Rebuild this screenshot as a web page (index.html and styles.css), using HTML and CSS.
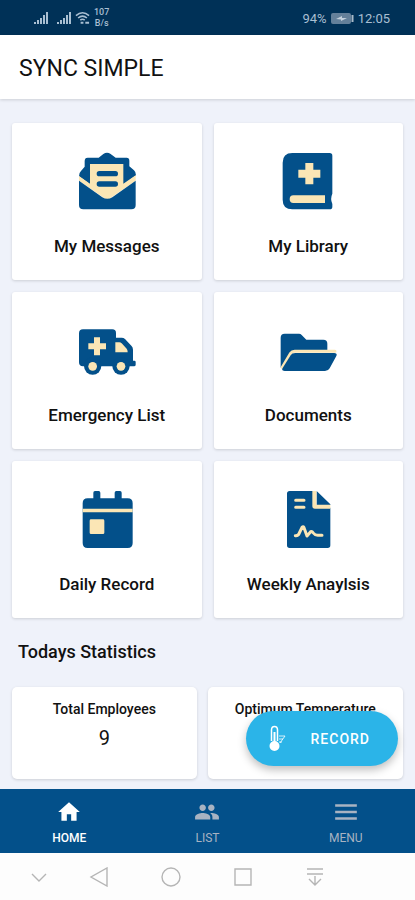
FILE: index.html
```html
<!DOCTYPE html>
<html lang="en">
<head>
  <meta charset="UTF-8" />
  <meta name="viewport" content="width=device-width, initial-scale=1.0"/>
  <title>Sync Simple</title>
  <link rel="stylesheet" href="styles.css">
</head>
<body>

  <div class="status-bar">
    <div class="status-group">
      <svg class="signal" viewBox="0 0 14 12" fill="currentColor"><path d="M0 10h2v2H0zM3 8h2v4H3zM6 6h2v6H6zM9 3h2v9H9zM12 0h2v12h-2z"/></svg>
      <svg class="signal signal-second" viewBox="0 0 14 12" fill="currentColor"><path d="M0 10h2v2H0zM3 8h2v4H3zM6 6h2v6H6zM9 3h2v9H9zM12 0h2v12h-2z"/></svg>
      <svg class="wifi" viewBox="0 0 16 14" fill="none" stroke="currentColor" stroke-width="1.6"><path d="M1 4.500q7-6 14 0M3.300 7q4.700-4 9.400 0M5.600 9.300q2.400-2 4.800 0"/><path d="M6 12h3M11 12h4" stroke-width="2"/></svg>
      <span class="speed">107<br>B/s</span>
    </div>
    <div class="status-group">
      <span>94%</span>
      <svg class="battery" viewBox="0 0 23 11"><rect x="0" y="0" width="20" height="11" rx="2" fill="#64809a"/><path d="M5 6l6-3v2h5l-6 3V6.500z" fill="#c3d0dc"/><path d="M21.500 2v7" stroke="#a9bac9" stroke-width="2"/></svg>
      <span>12:05</span>
    </div>
  </div>

  <header class="app-header">
    <h1>SYNC SIMPLE</h1>
  </header>

  <main class="content">
    <div class="card-grid">
      <a href="#messages" class="card">
        <svg class="card-icon" viewBox="0 0 174 174">
          <path class="blue" d="M76 6q11-8 22 0l15 11h33q8 0 8 9v17l14 12q6 5 6 15L88 135 3 73q0-11 6-16l11-13V27q0-10 9-10h33z"/>
          <path class="cream" d="M36 36h100v59l37-25v16L88 145 3 86V72l33 23z"/>
          <path class="blue" d="M3 86l70 50q15 9 30 0l70-50v73q0 13-13 13H16q-13 0-13-13z"/>
          <path class="blue-line" d="M64 65h48M64 96h48"/>
        </svg>
        <span>My Messages</span>
      </a>
      <a href="#library" class="card">
        <svg class="card-icon" viewBox="0 0 174 174">
          <path class="blue" d="M40 3h112q8 0 8 8v114q-7 15 0 31v8q0 8-8 8H40q-29 0-29-29V32Q11 3 40 3z"/>
          <path class="cream" d="M79 33h24v20h21v24h-21v20H79V77H58V53h21zM43 130h95v23H43q-11 0-11-11 0-12 11-12z"/>
        </svg>
        <span>My Library</span>
      </a>
      <a href="#emergency" class="card">
        <svg class="card-icon" viewBox="0 0 174 174">
          <path class="blue" d="M15 25h88q11 0 11 11v14h17q6 0 10 4l19 20q5 5 5 12v33h4q4 0 4 4v8q0 5-5 5H15q-12 0-12-12V37q0-12 12-12z"/>
          <circle class="blue" cx="44" cy="135" r="26"/>
          <circle class="blue" cx="129" cy="135" r="26"/>
          <circle class="cream" cx="44" cy="136" r="13"/>
          <circle class="cream" cx="129" cy="136" r="13"/>
          <path class="cream" d="M48 49h18v18h18v18H66v18H48V85H31V67h17zM112 64h12q4 0 7 3l15 16q3 3 3 11h-37z"/>
        </svg>
        <span>Emergency List</span>
      </a>
      <a href="#documents" class="card">
        <svg class="card-icon" viewBox="0 0 174 174">
          <path class="blue" d="M17 38h43q5 0 8 4l14 14h51q12 0 12 12v22H45L5 140V50q0-12 12-12z"/>
          <path class="cream-line" d="M10 139l24-41q5-7 13-7h121"/>
          <path class="blue" d="M49 96h117q10 0 6 9l-20 37q-4 8-14 8H17q-11 0-6-9l24-38q4-7 14-7z"/>
        </svg>
        <span>Documents</span>
      </a>
      <a href="#daily" class="card">
        <svg class="card-icon" viewBox="0 0 174 174">
          <path class="blue" d="M46 25V8q0-5 5-5h11q5 0 5 5v17h43V8q0-5 5-5h11q5 0 5 5v17h18q15 0 15 15v119q0 15-15 15H29q-15 0-15-15V40q0-15 15-15z"/>
          <path class="cream" d="M14 56h150v11H14zM39 88h36q4 0 4 4v36q0 4-4 4H39q-4 0-4-4V92q0-4 4-4z"/>
        </svg>
        <span>Daily Record</span>
      </a>
      <a href="#weekly" class="card">
        <svg class="card-icon" viewBox="0 0 174 174">
          <path class="blue" d="M32 3h70v50h52v113q0 8-8 8H32q-8 0-8-8V11q0-8 8-8zM113 3l41 40v2h-41z"/>
          <path class="cream" d="M100 3h12v41h42v12h-46q-8 0-8-8z"/>
          <path class="cream-line" d="M50 31h25M50 52h25M49 137q9 1 12-8l8-17q4-4 6 1l9 25 11-13q4-2 8 4 5 7 13 7h13"/>
        </svg>
        <span>Weekly Anaylsis</span>
      </a>
    </div>

    <h2>Todays Statistics</h2>

    <div class="stats">
      <div class="stat-card">
        <h3>Total Employees</h3>
        <p>9</p>
      </div>
      <div class="stat-card">
        <h3>Optimum Temperature</h3>
      </div>
    </div>

    <button type="button" class="btn-record">
      <svg class="thermometer" viewBox="0 0 18 28" fill="none" stroke="#fff">
        <path d="M3.500 16V5q0-3.500 3-3.500t3 3.500v11" stroke-width="1.500"/>
        <path d="M6.500 7v13" stroke-width="2"/>
        <circle cx="6.500" cy="21" r="4" fill="#fff" stroke-width="2"/>
        <path d="M11 11h6M11 14h4M11 17h3M17 11l-5 7" stroke-width="1" opacity=".8"/>
      </svg>
      <span>RECORD</span>
    </button>
  </main>

  <nav class="tab-bar">
    <a href="#home" class="tab active">
      <svg viewBox="0 0 24 24" fill="currentColor"><path d="M10 20v-6h4v6h5v-8h3L12 3 2 12h3v8z"/></svg>
      <span>HOME</span>
    </a>
    <a href="#list" class="tab">
      <svg viewBox="0 0 24 24" fill="currentColor"><path d="M16 11c1.660 0 2.990-1.340 2.990-3S17.660 5 16 5s-3 1.340-3 3 1.340 3 3 3zm-8 0c1.660 0 2.990-1.340 2.990-3S9.660 5 8 5 5 6.340 5 8s1.340 3 3 3zm0 2c-2.330 0-7 1.170-7 3.500V19h14v-2.500C15 14.170 10.330 13 8 13zm8 0c-.29 0-.62.020-.97.050 1.160.84 1.970 1.970 1.970 3.450V19h6v-2.500c0-2.330-4.670-3.500-7-3.500z"/></svg>
      <span>LIST</span>
    </a>
    <a href="#menu" class="tab">
      <svg viewBox="0 0 24 24" fill="none" stroke="currentColor" stroke-width="2.400"><path d="M2 6h20M2 12h20M2 18h20"/></svg>
      <span>MENU</span>
    </a>
  </nav>

  <div class="system-nav">
    <button type="button" class="hide-nav" aria-label="Hide"><svg viewBox="0 0 20 20"><path d="M3 7l7 7 7-7"/></svg></button>
    <button type="button" aria-label="Back"><svg viewBox="0 0 20 20"><path d="M18 1v18L2 10z"/></svg></button>
    <button type="button" aria-label="Home"><svg viewBox="0 0 20 20"><circle cx="10" cy="10" r="9"/></svg></button>
    <button type="button" aria-label="Recent"><svg viewBox="0 0 20 20"><path d="M2 2h16v16H2z"/></svg></button>
    <button type="button" aria-label="Notifications"><svg viewBox="0 0 20 20"><path d="M2 2h16M2 7h16M10 9v9M4 12l6 6 6-6"/></svg></button>
  </div>

</body>
</html>
```

FILE: styles.css
```css
* {
  box-sizing: border-box;
}

body {
  font-family: Roboto, sans-serif;
  margin: 0;
  min-height: 100vh;
  display: flex;
  flex-direction: column;
  background: #eff2fa;
  color: #111;
}

a {
  color: inherit;
  text-decoration: none;
}

h1, h2, h3, p {
  margin: 0;
}

.status-bar {
  display: flex;
  justify-content: space-between;
  align-items: center;
  height: 35px;
  padding: 1px 25px 0 34px;
  background: #003157;
  color: #a9bfd2;
  font-size: 13px;
}

.status-group {
  display: flex;
  align-items: center;
  gap: 4px;
}

.signal {
  width: 14px;
  height: 12px;
}

.signal-second {
  margin-left: 5px;
}

.wifi {
  width: 15px;
  height: 14px;
}

.battery {
  width: 23px;
  height: 11px;
}

.speed {
  font-size: 9px;
  font-weight: 500;
  line-height: 11px;
  text-align: center;
}

.app-header {
  display: flex;
  align-items: center;
  height: 64px;
  padding: 2px 19px 0;
  background: #fff;
  box-shadow: 0 1px 3px rgba(0, 0, 0, 0.15);
}

.app-header h1 {
  font-size: 23px;
  font-weight: 400;
}

.content {
  position: relative;
  flex: 1;
  padding: 24px 12px 10px;
}

.card-grid {
  display: grid;
  grid-template-columns: 1fr 1fr;
  gap: 12px;
}

.card {
  display: flex;
  flex-direction: column;
  align-items: center;
  gap: 26px;
  padding: 29px 8px 24px;
  background: #fff;
  border-radius: 3px;
  box-shadow: 0 1px 3px rgba(0, 0, 0, 0.15);
  font-size: 17px;
  font-weight: 500;
  line-height: 20px;
}

.card-icon {
  width: 58px;
  height: 58px;
}

.blue {
  fill: #03508a;
}

.cream {
  fill: #fbe6b5;
}

.blue-line {
  fill: none;
  stroke: #03508a;
  stroke-width: 16;
  stroke-linecap: round;
}

.cream-line {
  fill: none;
  stroke: #fbe6b5;
  stroke-width: 9;
  stroke-linecap: round;
  stroke-linejoin: round;
}

.content h2 {
  margin: 22px 6px 23px;
  font-size: 18px;
  font-weight: 500;
  line-height: 24px;
}

.stats {
  display: grid;
  grid-template-columns: 17fr 18fr;
  gap: 11px;
}

.stat-card {
  height: 92px;
  padding-top: 12px;
  background: #fff;
  border-radius: 5px;
  box-shadow: 0 1px 3px rgba(0, 0, 0, 0.15);
  text-align: center;
}

.stat-card h3 {
  font-size: 14px;
  font-weight: 500;
  line-height: 20px;
}

.stat-card p {
  margin-top: 7px;
  font-size: 20px;
  line-height: 24px;
}

.btn-record {
  position: absolute;
  right: 17px;
  bottom: 23px;
  display: flex;
  align-items: center;
  gap: 25px;
  height: 55px;
  padding: 0 28px 0 22px;
  border: none;
  border-radius: 28px;
  background: #2bb4e8;
  color: #fff;
  box-shadow: 0 4px 8px rgba(0, 0, 0, 0.25);
  font-family: inherit;
  font-size: 14px;
  font-weight: 500;
  letter-spacing: 1px;
  cursor: pointer;
}

.thermometer {
  width: 18px;
  height: 28px;
}

.tab-bar {
  display: flex;
  height: 64px;
  background: #03508a;
  color: #a8b3c2;
}

.tab {
  flex: 1;
  display: flex;
  flex-direction: column;
  align-items: center;
  padding-top: 10px;
  gap: 6px;
  font-size: 12px;
  line-height: 14px;
}

.tab svg {
  width: 26px;
  height: 26px;
}

.tab.active {
  color: #fff;
  font-weight: 500;
}

.system-nav {
  display: flex;
  align-items: center;
  height: 47px;
  padding-left: 29px;
  gap: 52px;
  background: #fdfdfd;
}

.system-nav button {
  padding: 0;
  border: none;
  background: none;
}

.system-nav .hide-nav {
  margin-right: -12px;
}

.system-nav svg {
  display: block;
  width: 20px;
  height: 20px;
  fill: none;
  stroke: #b5b5b5;
  stroke-width: 1.4;
}
```
